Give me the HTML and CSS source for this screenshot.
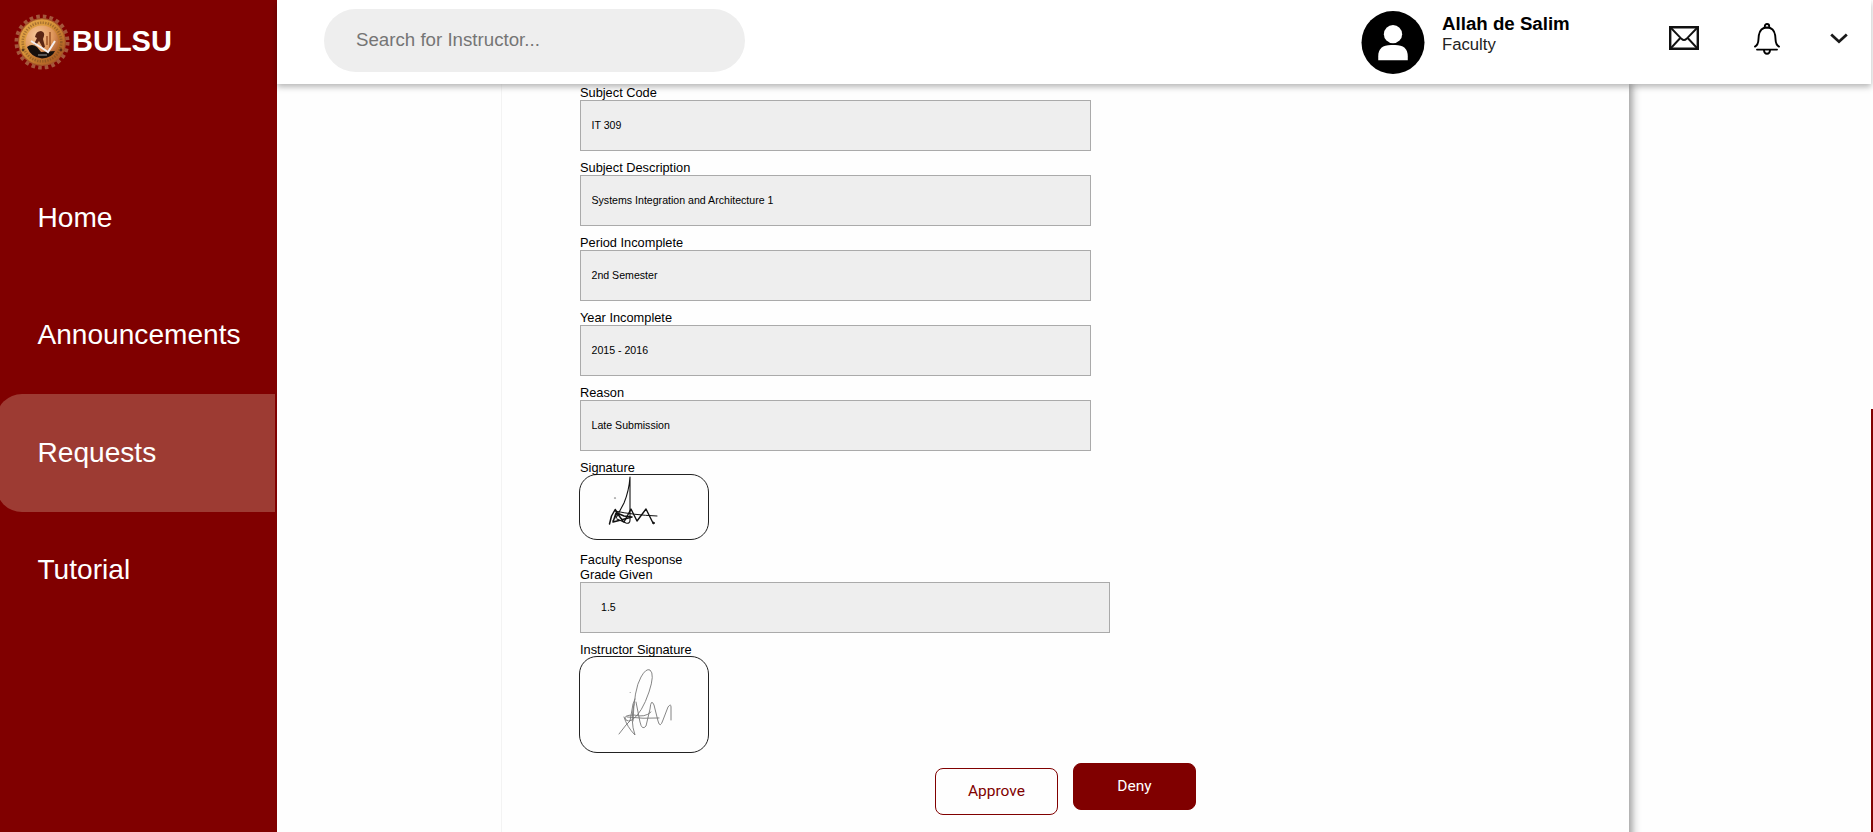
FILE: index.html
```html
<!DOCTYPE html>
<html lang="en">
<head>
<meta charset="utf-8">
<title>BULSU - Requests</title>
<link rel="stylesheet" href="styles.css">
</head>
<body>
<div class="app">
  <aside class="sidebar">
    <div class="brand">
      <svg class="brand-logo" viewBox="0 0 56 56">
        <defs>
          <linearGradient id="gold" x1="0" y1="0" x2="1" y2="1"><stop offset="0" stop-color="#e0a24c"/><stop offset=".35" stop-color="#dc9a3c"/><stop offset="1" stop-color="#a04c1c"/></linearGradient>
          <radialGradient id="core" cx=".35" cy=".3" r=".8"><stop offset="0" stop-color="#f6c79a"/><stop offset=".6" stop-color="#e0985c"/><stop offset="1" stop-color="#a5562a"/></radialGradient>
        </defs>
        <circle cx="28" cy="28" r="25.5" fill="none" stroke="#a5563c" stroke-width="4" stroke-dasharray="3.6 3.08"/>
        <circle cx="28" cy="28" r="24" fill="#a5562a"/>
        <circle cx="28" cy="28" r="22.8" fill="url(#gold)"/>
        <circle cx="28" cy="28" r="19.3" fill="none" stroke="#6e4520" stroke-width="2.600" stroke-dasharray="1.3 1.3" opacity=".5"/>
        <circle cx="28" cy="28" r="16.5" fill="url(#core)"/>
        <path d="M13 33q5-4 10 0l4 5 14-1q-3 7-13 7.500-11-1-15-11.500z" fill="#17100c"/>
        <path d="M21 23q1-6 6-6 4 1 3 5l-1 3 2 8-2 1-4-7-3 4-2-1 3-6z" fill="#5a2614"/>
        <path d="M36 18v16M33 22v9" stroke="#9d5427" stroke-width="1.5"/>
        <path d="M17 27l11 7 6 4 7-11" fill="none" stroke="#f3eef0" stroke-width="2"/>
        <circle cx="9" cy="36" r="1.4" fill="#5c3a1c"/><circle cx="47" cy="36" r="1.4" fill="#5c2a12"/>
        <path d="M24 41h9" stroke="#858585" stroke-width="1.2"/>
      </svg>
      <span class="brand-name">BULSU</span>
    </div>
    <nav class="nav">
      <a class="nav-item">Home</a>
      <a class="nav-item">Announcements</a>
      <a class="nav-item nav-item-active">Requests</a>
      <a class="nav-item">Tutorial</a>
    </nav>
  </aside>
  <div class="main">
    <header class="topbar">
      <input class="search" type="text" placeholder="Search for Instructor...">
      <div class="user">
        <svg class="avatar" viewBox="0 0 64 64"><circle cx="32" cy="32" r="32"/><circle cx="32" cy="23.5" r="9.3" fill="#fff"/><path d="M17 50v-4q0-11.500 13-11.500h4q13 0 13 11.500v4z" fill="#fff"/></svg>
        <div class="user-text">
          <span class="user-name">Allah de Salim</span>
          <span class="user-role">Faculty</span>
        </div>
      </div>
      <div class="actions">
        <svg class="icon-mail" viewBox="0 0 30 24" fill="none" stroke="#111"><path d="M1.200 1.200h27.600v21.600H1.200z" stroke-width="2.400"/><path d="M2 2l10.500 10.800q2.500 2.400 5 0L28 2M2 22l9.300-10M28 22l-9.300-10" stroke-width="1.900"/></svg>
        <svg class="icon-bell" viewBox="0 0 26 32" fill="none" stroke="#000" stroke-width="1.900" stroke-linecap="round"><path d="M10.800 4.300V3.200a2.200 2.200 0 0 1 4.400 0v1.100M1 23.600q3.200-1.800 3.400-6.600l.4-4.500Q6 4.600 13 4.500q7 .1 8.200 8l.4 4.500q.2 4.800 3.400 6.600M3 26.600h20M10 27.500q.3 3.300 3 3.300t3-3.300"/></svg>
        <svg class="icon-chevron" viewBox="0 0 18 11" fill="none" stroke="#1a1a1a" stroke-width="2.800"><path d="M1.200 1.500L9 8.700l7.800-7.200"/></svg>
      </div>
    </header>
    <div class="content">
      <section class="card">
        <div class="field"><label class="label">Subject Code</label><div class="value">IT 309</div></div>
        <div class="field"><label class="label">Subject Description</label><div class="value">Systems Integration and Architecture 1</div></div>
        <div class="field"><label class="label">Period Incomplete</label><div class="value">2nd Semester</div></div>
        <div class="field"><label class="label">Year Incomplete</label><div class="value">2015 - 2016</div></div>
        <div class="field"><label class="label">Reason</label><div class="value">Late Submission</div></div>
        <label class="label">Signature</label>
        <div class="signature">
          <svg class="signature-ink" viewBox="0 0 128 64" fill="none" stroke="#111" stroke-linecap="round" stroke-linejoin="round"><path d="M29.500 49l2-8 3.700-6.500 3 5 5 7M33 46l4-8 7 3 8 1-15 4-4 1 3-9" stroke-width="1.500"/><path d="M36 43L44 28q5-12 6-26v43q0 4-4 3l-9-4" stroke-width="1.100"/><path d="M44 47l7-13 6 12 9-12 7 14" stroke-width="1.400"/><path d="M35 36q18 4 42 5" stroke-width="1"/><circle cx="73.500" cy="48" r=".8" fill="#111"/><path d="M34.500 23h1" stroke-width="1.200" opacity=".6"/></svg>
        </div>
        <div class="label response-title">Faculty Response</div>
        <div class="field"><label class="label">Grade Given</label><div class="value value-grade">1.5</div></div>
        <label class="label">Instructor Signature</label>
        <div class="signature signature-tall">
          <svg class="signature-ink" viewBox="0 0 128 95" fill="none" stroke="#777" stroke-width=".9" stroke-linecap="round" stroke-linejoin="round"><path d="M39 77l7-9 4-4 3-17 2-5M53 64q1-32 8-44 5-9 9-7 5 4-1 22-7 21-17 28-4 2-6 0-4-5 8-5 11 3 17-3M44 60q3 10 11 18-5-14-1-31M56 45l4 20q2 9 6 4l4-17q1-11 4-4l4 16q2 8 5-1l5-13q3-4 3 0v13M47 60q16 2 32 1"/><path d="M50 35.500h.5" opacity=".6"/></svg>
        </div>
        <div class="buttons">
          <button class="btn btn-approve">Approve</button>
          <button class="btn btn-deny">Deny</button>
        </div>
      </section>
    </div>
  </div>
  <div class="scroll-thumb"></div>
</div>
</body>
</html>
```
FILE: styles.css
```css
* { box-sizing: border-box; }
body { margin: 0; font-family: "Liberation Sans", Arial, sans-serif; color: #000; background: #fefefe; }
.app { display: flex; height: 832px; overflow: hidden; position: relative; }

.sidebar { width: 277px; flex: none; background: #800000; color: #fff; }
.brand { display: flex; align-items: center; height: 83px; padding-left: 14px; }
.brand-logo { width: 56px; height: 56px; }
.brand-name { font-size: 29px; font-weight: bold; margin-left: 2px; }
.nav { display: flex; flex-direction: column; padding-top: 76px; }
.nav-item { display: flex; align-items: center; height: 117.5px; margin: 0 2px 0 -4px; padding-left: 41.500px; font-size: 28.100px; }
.nav-item-active { background: #9d3b33; border-radius: 26px 0 0 26px; }

.main { flex: 1; min-width: 0; display: flex; flex-direction: column; margin-right: 2px; }
.topbar { display: flex; align-items: flex-start; height: 84px; flex: none; background: #fff; box-shadow: 0 3px 6px rgba(0, 0, 0, .28); position: relative; z-index: 1; padding-left: 47px; }
.search { width: 421px; height: 63px; margin-top: 9px; border: 0; border-radius: 32px; background: #eee; padding: 0 32px 2px; font: 18.7px "Liberation Sans", Arial, sans-serif; }
.search::placeholder { color: #757575; }
.user { display: flex; margin: 11px 0 0 616px; width: 307.500px; gap: 17px; }
.avatar { width: 64px; height: 63px; }
.user-text { display: flex; flex-direction: column; padding-top: 2px; }
.user-name { font-size: 18.7px; font-weight: bold; line-height: 21px; }
.user-role { font-size: 16.700px; line-height: 21px; color: #222; }
.actions { display: flex; }
.icon-mail { width: 30px; height: 24px; margin-top: 26px; }
.icon-bell { width: 26px; height: 32px; margin: 22.500px 0 0 55.500px; }
.icon-chevron { width: 18px; height: 11px; margin: 33px 0 0 50px; }

.content { flex: 1; min-height: 0; padding-left: 225px; }
.card { width: 1127px; height: 760px; padding: 1px 0 0 78px; background: #fefefe; box-shadow: 4px 0 8px rgba(0, 0, 0, .3), 3px 0 4px rgba(0, 0, 0, .08); clip-path: inset(0 -20px 0 -1px); }
.field { margin-bottom: 9px; }
.label { display: block; font-size: 12.800px; line-height: 15px; }
.value { display: flex; align-items: center; width: 511px; height: 51px; border: 1px solid #aaa; background: #eee; padding: 0 0 2px 10.500px; font-size: 10.600px; }
.value-grade { width: 530px; padding-left: 20px; }
.signature { width: 130px; height: 66px; margin: -1px 0 0 -1px; border: 1px solid #222; border-radius: 18px; }
.signature-tall { height: 97px; }
.signature-ink { display: block; width: 128px; height: 100%; }
.response-title { margin-top: 12px; }
.buttons { display: flex; gap: 15px; padding: 10px 0 0 355px; }
.btn { width: 123px; height: 47px; border: 1px solid #800000; border-radius: 8px; padding-bottom: 3px; font: 15.500px Roboto, sans-serif; }
.btn-approve { margin-top: 5px; color: #800000; background: #fefefe; }
.btn-deny { color: #fff; background: #800000; }

.scroll-thumb { position: absolute; right: 0; top: 409px; width: 2px; height: 423px; background: #800000; }
```
